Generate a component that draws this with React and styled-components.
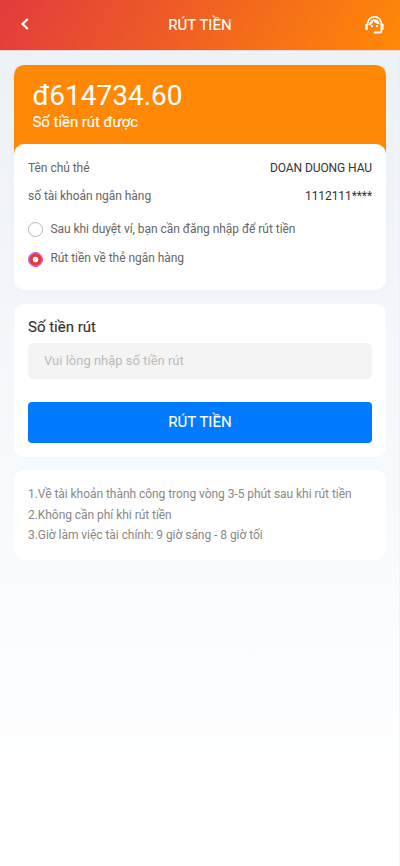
import React from 'react';
import styled, { createGlobalStyle } from 'styled-components';

const GlobalStyle = createGlobalStyle`
  * { box-sizing: border-box; }
  body { margin: 0; font-family: Roboto, sans-serif; background: #fff; }
`;

const Page = styled.div`
  height: 866px;
  background:
    linear-gradient(#f3ebe8, #faf6f3) right / 1px 100% no-repeat,
    linear-gradient(180deg, #edf2f7 0, #edf2f7 50px, #f7fafd 500px, #ffffff 800px);
`;

const Header = styled.header`
  height: 50px;
  padding: 0 15px 0 20px;
  display: grid;
  grid-template-columns: 21px 1fr 21px;
  align-items: center;
  color: #fff;
  background: linear-gradient(120deg, #e23b3d, #ff8906);
  box-shadow: 0 1px #ead8d6;
`;

const IconButton = styled.button`
  width: 21px;
  height: 21px;
  padding: 0;
  border: 0;
  display: flex;
  align-items: center;
  color: inherit;
  background: none;
`;

const BackButton = styled(IconButton)`
  padding-bottom: 2px;
`;

const Title = styled.h1`
  margin: 0;
  padding-right: 5px;
  text-align: center;
  font-size: 15px;
  font-weight: 400;
  line-height: 20px;
  -webkit-text-stroke: 0.12px;
`;

const Content = styled.main`
  padding: 15px 14px 0;
`;

const Wallet = styled.section`
  border-radius: 10px;
  background: linear-gradient(#ff8906 90px, transparent 90px);
  box-shadow: 0 2px 16px rgba(60, 80, 100, 0.025);
`;

const Balance = styled.div`
  height: 79px;
  padding: 15px 18.5px 0;
  color: #fff;
`;

const Amount = styled.div`
  font-size: 28px;
  line-height: 32px;
`;

const Caption = styled.div`
  font-size: 15px;
  letter-spacing: -0.05px;
  line-height: 20px;
  -webkit-text-stroke: 0.1px;
`;

const Card = styled.section`
  height: ${(p) => p.$height}px;
  margin-top: ${(p) => p.$gap || 0}px;
  padding: ${(p) => p.$pad || 14}px 14px 0;
  border-radius: 10px;
  background: #fff;
`;

const Row = styled.div`
  display: flex;
  justify-content: space-between;
  height: 28px;
  line-height: 20px;
  font-size: 12px;
  letter-spacing: -0.04px;
  color: #666;
`;

const Value = styled.span`
  color: #333;
  letter-spacing: -0.08px;
`;

const Option = styled.label`
  display: flex;
  height: 29px;
  margin-top: ${(p) => p.$offset || 0}px;
  font-size: 12px;
  letter-spacing: -0.04px;
  line-height: 20px;
  color: #666;
`;

const Radio = styled.input`
  appearance: none;
  width: 15px;
  height: 15px;
  margin: 3px 7.4px 0 0;
  border: 1px solid #b4b9c0;
  border-radius: 50%;
  background: #fff;

  &:checked {
    margin-top: 4px;
    border-color: #9b45ef;
    background: radial-gradient(circle, #fff 2.5px, #e23b3d 3.2px) padding-box;
  }
`;

const FieldLabel = styled.label`
  display: block;
  font-size: 15px;
  line-height: 20px;
  color: #333;
  -webkit-text-stroke: 0.15px;
`;

const AmountInput = styled.input`
  display: block;
  width: 100%;
  height: 36px;
  margin-top: 6px;
  padding: 0 16px 1px;
  border: 0;
  border-radius: 5px;
  background: #f4f4f4;
  font: 13px Roboto, sans-serif;

  &::placeholder { color: #bbb; }
`;

const Submit = styled.button`
  display: block;
  width: 100%;
  height: 41px;
  margin-top: 22.5px;
  padding: 0;
  border: 0;
  border-radius: 4px;
  color: #fff;
  background: #007bff;
  font: 15px Roboto, sans-serif;
  -webkit-text-stroke: 0.12px;
`;

const Note = styled.p`
  margin: 0;
  font-size: 12px;
  letter-spacing: -0.045px;
  line-height: 20.5px;
  color: #888;
`;

export default function App() {
  return (
    <Page>
      <GlobalStyle />
      <Header>
        <BackButton aria-label="Back">
          <svg width="10" height="12" viewBox="0 0 10 12" fill="none" stroke="currentColor" strokeWidth="2.2">
            <path d="M7.8 1 2.5 6l5.3 5" />
          </svg>
        </BackButton>
        <Title>RÚT TIỀN</Title>
        <IconButton aria-label="Support">
          <svg width="21" height="21" viewBox="0 0 21 21" fill="none" stroke="currentColor">
            <path d="M3.6 10.2V9.6C3.6 4.9 6.5 1.9 10.5 1.9s6.9 3 6.9 7.7v6.9c0 .7-.4 1-1 1H9.8" strokeWidth="1.8" />
            <path d="M2.6 10v4M18.4 9.8v4" strokeWidth="2.4" strokeLinecap="round" />
            <path d="M5.1 10.6c2.6-1 4.1-2.8 4.5-5.2 1.1 2.3 3.1 3.7 6.1 3.8-.4-3-2.5-4.9-5.2-4.9-3.1 0-5.5 2.5-5.4 6.3Z" fill="currentColor" stroke="none" />
            <circle cx="8" cy="11.2" r="1.1" fill="currentColor" stroke="none" />
            <circle cx="13" cy="11.2" r="1.1" fill="currentColor" stroke="none" />
          </svg>
        </IconButton>
      </Header>
      <Content>
        <Wallet>
          <Balance>
            <Amount>đ614734.60</Amount>
            <Caption>Số tiền rút được</Caption>
          </Balance>
          <Card $height={145.5}>
            <Row><span>Tên chủ thẻ</span><Value>DOAN DUONG HAU</Value></Row>
            <Row><span>số tài khoản ngân hàng</span><Value>1112111****</Value></Row>
            <Option $offset={5}><Radio type="radio" name="target" />Sau khi duyệt ví, bạn cần đăng nhập để rút tiền</Option>
            <Option><Radio type="radio" name="target" defaultChecked />Rút tiền về thẻ ngân hàng</Option>
          </Card>
        </Wallet>
        <Card $height={152.5} $gap={14.5} $pad={13}>
          <FieldLabel htmlFor="amount">Số tiền rút</FieldLabel>
          <AmountInput id="amount" placeholder="Vui lòng nhập số tiền rút" />
          <Submit>RÚT TIỀN</Submit>
        </Card>
        <Card $height={90} $gap={13.5}>
          <Note>1.Về tài khoản thành công trong vòng 3-5 phút sau khi rút tiền</Note>
          <Note>2.Không cần phí khi rút tiền</Note>
          <Note>3.Giờ làm việc tài chính: 9 giờ sáng - 8 giờ tối</Note>
        </Card>
      </Content>
    </Page>
  );
}
